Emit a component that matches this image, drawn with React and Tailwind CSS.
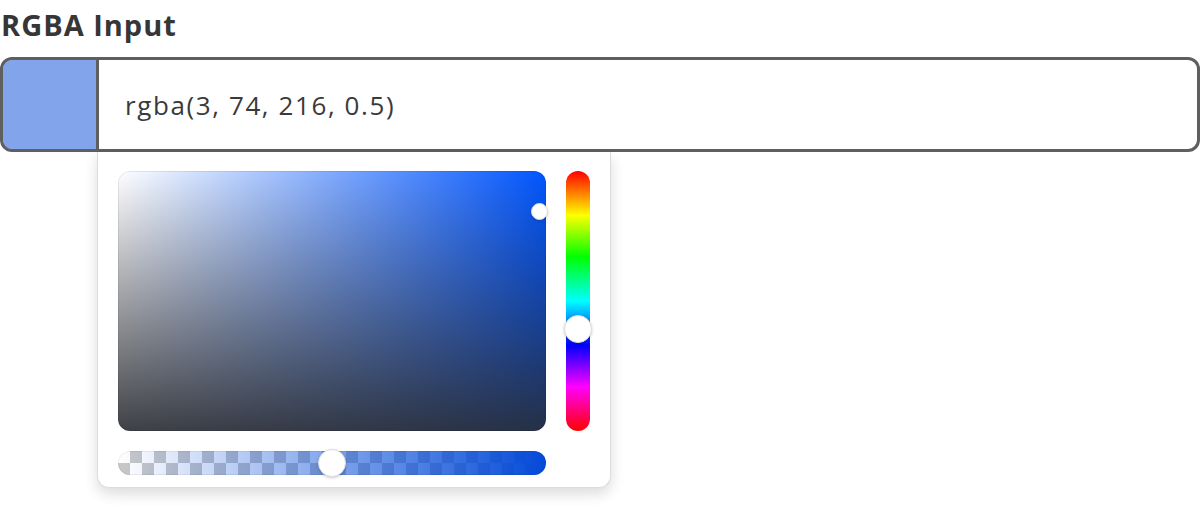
export default function App() {
  return (
    <div className="min-h-screen bg-white font-['Open_Sans',sans-serif] text-[#333]">
      <h1 className="pt-[8px] pl-[1px] text-[29px] font-bold leading-[34px] tracking-[1px] text-[#363636]">RGBA Input</h1>

      <div className="relative mt-[15px]">
        <div className="flex h-[95px] overflow-hidden rounded-[12px] border-[3px] border-[#5f5f5f]">
          <div className="w-[96px] shrink-0 border-r-[3px] border-[#5f5f5f] bg-[rgba(3,74,216,0.5)]" />
          <div className="flex items-center pl-[26px] pt-[2px] text-[26px] tracking-[1.6px] text-[#3a3a3a]">
            rgba(3, 74, 216, 0.5)
          </div>
        </div>

        {/* picker popover */}
        <div className="absolute left-[97px] top-full w-[514px] rounded-b-[12px] border border-t-0 border-[#dcdcdc] bg-white px-[20px] pt-[19px] pb-[12px] shadow-[0_6px_14px_rgba(0,0,0,0.14)]">
          <div className="flex gap-[20px]">
            <div className="relative h-[260px] w-[428px] rounded-[12px] bg-[#0055ff] bg-[image:linear-gradient(to_top,rgba(42,44,50,0.9),rgba(0,0,0,0)),linear-gradient(to_right,#fff,rgba(255,255,255,0))] shadow-[inset_0_0_0_1px_rgba(0,0,0,0.08)]">
              <span className="absolute left-[413px] top-[32px] h-[17px] w-[17px] rounded-full border border-[#ddd] bg-white shadow-[0_1px_3px_rgba(0,0,0,0.2)]" />
            </div>
            <div className="relative h-[260px] w-[24px] rounded-full bg-[image:linear-gradient(to_bottom,#f00_0%,#ff0_17%,#0f0_33%,#0ff_50%,#00f_67%,#f0f_83%,#f00_100%)]">
              <span className="absolute left-[-2px] top-[144px] h-[28px] w-[28px] rounded-full border border-[#ddd] bg-white shadow-[0_1px_3px_rgba(0,0,0,0.2)]" />
            </div>
          </div>

          <div className="relative mt-[20px] h-[24px] w-[428px] rounded-full bg-white bg-[image:conic-gradient(#c8c8c8_25%,#fff_0_50%,#c8c8c8_0_75%,#fff_0)] bg-[length:24px_24px]">
            <div className="absolute inset-0 rounded-full bg-[image:linear-gradient(to_right,rgba(3,74,216,0),rgb(3,74,216))] shadow-[inset_0_0_0_1px_rgba(0,0,0,0.06)]" />
            <span className="absolute left-[200px] top-[-2px] h-[28px] w-[28px] rounded-full border border-[#ddd] bg-white shadow-[0_1px_3px_rgba(0,0,0,0.2)]" />
          </div>
        </div>
      </div>
    </div>
  );
}
